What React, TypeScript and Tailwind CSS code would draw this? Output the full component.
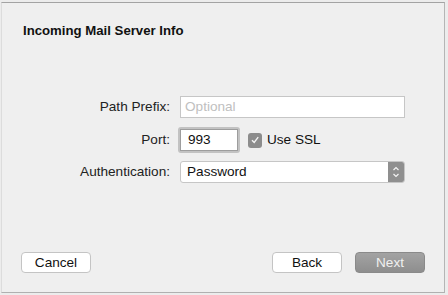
import React from 'react';

const font = { fontFamily: '"Liberation Sans", Arial, sans-serif' };

export default function App() {
  return (
    <div className="w-[448px] h-[295px] bg-[#ececec] pt-[2px] pl-[1px] pr-[3px] pb-[2px]" style={font}>
      <div className="h-full flex flex-col border-t border-r border-b border-l border-t-[#a3a3a3] border-r-[#b5b5b5] border-b-[#b0b0b0] border-l-[#dcdcdc] bg-[#efefef]">
        {/* Heading */}
        <div className="pt-[20px] pl-[21px] text-[13.2px] leading-[16px] font-bold text-[#111]">
          Incoming Mail Server Info
        </div>

        {/* Form */}
        <div className="mt-[57px] flex flex-col text-[13.6px] text-[#222]">
          <div className="flex items-center h-[22px]">
            <div className="w-[169px] text-right pr-[1px]">Path Prefix:</div>
            <div className="ml-[9px] w-[225px] h-[22px] bg-white border border-[#c6c6c6] flex items-center pl-[4px] text-[#c0c0c0]">
              Optional
            </div>
          </div>

          <div className="flex items-center h-[26px] mt-[9px]">
            <div className="w-[169px] text-right pr-[1px]">Port:</div>
            <div className="ml-[7px] w-[62px] h-[26px] rounded-[3px] bg-[#c2c2c2] p-[2px]">
              <div className="h-full bg-white border border-[#9d9d9d] flex items-center pl-[7px] text-[#111]">993</div>
            </div>
            <div className="ml-[8px] w-[14px] h-[15px] rounded-[3px] bg-[#8c8c8c] flex items-center justify-center">
              <svg width="10" height="10" viewBox="0 0 10 10">
                <path d="M2 5.2 L4.2 7.5 L8.2 2.2" fill="none" stroke="#f4f4f4" strokeWidth="1.4" />
              </svg>
            </div>
            <div className="ml-[5px] text-[#111]">Use SSL</div>
          </div>

          <div className="flex items-center h-[22px] mt-[8px]">
            <div className="w-[169px] text-right pr-[1px]">Authentication:</div>
            <div className="ml-[9px] w-[225px] h-[22px] bg-white border border-[#c6c6c6] rounded-[3px] flex items-center overflow-hidden">
              <div className="flex-1 pl-[6px] text-[#111]">Password</div>
              <div className="w-[16px] h-full bg-[#8f8f8f] flex items-center justify-center">
                <svg width="8" height="14" viewBox="0 0 8 14">
                  <path d="M1.5 5 L4 2.5 L6.5 5 M1.5 9 L4 11.5 L6.5 9" fill="none" stroke="#f4f4f4" strokeWidth="1.2" />
                </svg>
              </div>
            </div>
          </div>
        </div>

        <div className="flex-1" />

        {/* Buttons */}
        <div className="flex items-center pb-[19px] pl-[19px] pr-[19px] text-[13.6px]">
          <button className="w-[70px] h-[21px] bg-white border border-[#c4c4c4] rounded-[4px] text-[#111] leading-none">Cancel</button>
          <div className="flex-1" />
          <button className="w-[70px] h-[21px] bg-white border border-[#c4c4c4] rounded-[4px] text-[#111] leading-none">Back</button>
          <button className="ml-[13px] w-[70px] h-[21px] bg-gradient-to-b from-[#a3a3a3] to-[#8e8e8e] border border-[#8a8a8a] rounded-[4px] text-[#f0f0f0] leading-none">Next</button>
        </div>
      </div>
    </div>
  );
}
